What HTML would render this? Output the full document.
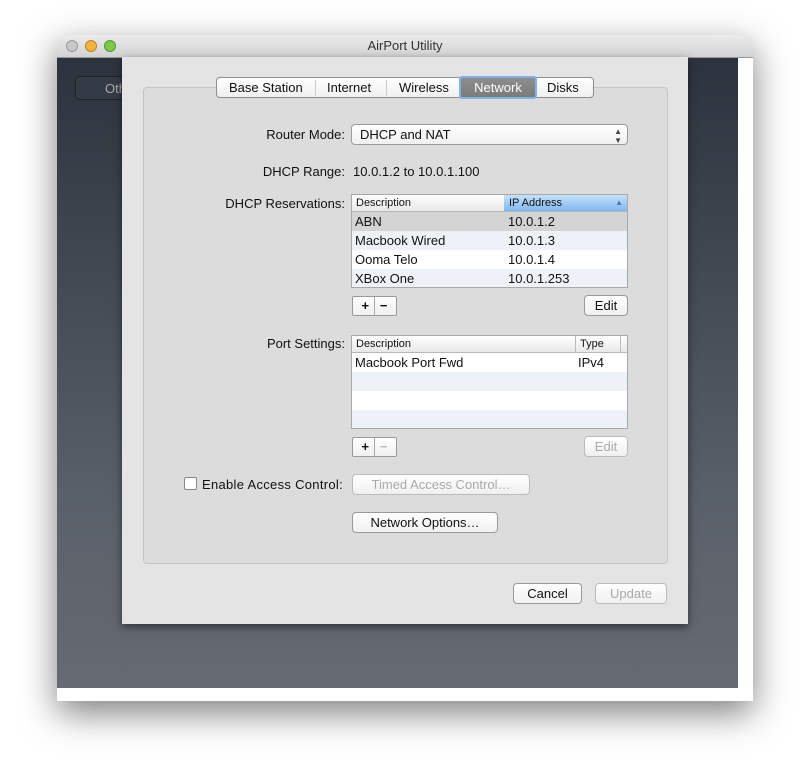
<!DOCTYPE html><html><head><style>
body{margin:0;width:810px;height:781px;background:#fff;font-family:"Liberation Sans",sans-serif;font-size:13px;color:#111;position:relative;overflow:hidden}
.a{position:absolute}
.win{left:57px;top:35px;width:696px;height:666px;background:#fff;box-shadow:0 12px 35px rgba(0,0,0,.5);border-radius:5px 5px 0 0}
.tb{left:0;top:0;width:696px;height:22px;background:linear-gradient(#ececec,#d2d2d2);border-bottom:1px solid #999;border-radius:5px 5px 0 0;text-align:center;line-height:22px;color:#333}
.dot{top:5px;width:12px;height:12px;border-radius:50%}
.dark{left:0;top:23px;width:681px;height:630px;background:linear-gradient(#2d333e,#5a6069 70%,#666a72)}
.sheet{left:122px;top:57px;width:566px;height:567px;background:#e4e4e4;box-shadow:0 3px 8px rgba(0,0,0,.5)}
.grp{left:143px;top:87px;width:523px;height:475px;background:#dcdcdc;border:1px solid #c4c4c4;border-radius:4px}
.btn{background:linear-gradient(#fff,#f0f0f0);border:1px solid #9a9a9a;border-radius:4px;text-align:center;box-sizing:border-box;height:21px;line-height:19px}
.dis{color:#aaa;border-color:#bbb}
.lbl{text-align:right;width:200px}
.tbl{background:#fff;border:1px solid #a8a8a8;box-sizing:border-box;overflow:hidden}
.hd{height:16px;background:linear-gradient(#fff,#e8e8e8);border-bottom:1px solid #b8b8b8;font-size:11px;line-height:16px}
.row{height:19px;line-height:19px;position:relative}
.alt{background:#eef2f8}
</style></head><body>
<div class="a win">
<div class="a tb">AirPort Utility
<div class="a dot" style="left:9px;background:#c8c8c8;border:1px solid #999;box-sizing:border-box"></div>
<div class="a dot" style="left:28px;background:#f5b33d;border:1px solid #b98220;box-sizing:border-box"></div>
<div class="a dot" style="left:47px;background:#7ec94c;border:1px solid #4f9a2a;box-sizing:border-box"></div>
</div>
<div class="a dark"></div>
</div>
<div class="a" style="left:75px;top:76px;width:80px;height:24px;background:#353b46;border:1px solid #1f232a;border-radius:4px;color:#aaa;line-height:24px;padding-left:29px;box-sizing:border-box">Oth</div>
<div class="a sheet"></div>
<div class="a grp"></div>
<div class="a" style="left:216px;top:77px;width:378px;height:21px;background:linear-gradient(#fff,#f0f0f0);border:1px solid #8e8e8e;border-radius:4px;box-sizing:border-box"></div>
<div class="a" style="left:229px;top:80px">Base Station</div>
<div class="a" style="left:315px;top:80px;width:1px;height:16px;background:#ccc"></div>
<div class="a" style="left:327px;top:80px">Internet</div>
<div class="a" style="left:386px;top:80px;width:1px;height:16px;background:#ccc"></div>
<div class="a" style="left:399px;top:80px">Wireless</div>
<div class="a" style="left:459px;top:76px;width:78px;height:23px;background:linear-gradient(#8e8e8e,#7a7a7a);border:2px solid #7db3ea;border-radius:3px;box-sizing:border-box;color:#fff;text-align:center;line-height:19px">Network</div>
<div class="a" style="left:547px;top:80px">Disks</div>

<div class="a lbl" style="left:145px;top:127px">Router Mode:</div>
<div class="a btn" style="left:351px;top:124px;width:277px;text-align:left;padding-left:8px">DHCP and NAT<span class="a" style="right:5px;font-size:8px;line-height:9px;top:2px;color:#444">▲<br>▼</span></div>
<div class="a lbl" style="left:145px;top:164px">DHCP Range:</div>
<div class="a" style="left:353px;top:164px">10.0.1.2 to 10.0.1.100</div>
<div class="a lbl" style="left:145px;top:196px">DHCP Reservations:</div>
<div class="a tbl" style="left:351px;top:194px;width:277px;height:94px">
<div class="hd" style="position:relative"><span style="padding-left:4px">Description</span><div class="a" style="left:152px;top:0;width:123px;height:16px;background:linear-gradient(#c6e0fa,#7fb8ee);padding-left:5px;box-sizing:border-box">IP Address<span style="float:right;margin-right:4px;font-size:8px;color:#4a7bb0">▲</span></div></div>
<div class="row" style="background:#d4d4d4"><span style="padding-left:3px">ABN</span><span class="a" style="left:156px">10.0.1.2</span></div>
<div class="row alt"><span style="padding-left:3px">Macbook Wired</span><span class="a" style="left:156px">10.0.1.3</span></div>
<div class="row"><span style="padding-left:3px">Ooma Telo</span><span class="a" style="left:156px">10.0.1.4</span></div>
<div class="row alt"><span style="padding-left:3px">XBox One</span><span class="a" style="left:156px">10.0.1.253</span></div>
</div>
<div class="a btn" style="left:352px;top:296px;width:45px;height:20px;border-radius:2px;font-weight:bold;line-height:18px">+ &nbsp; −</div>
<div class="a" style="left:374px;top:297px;width:1px;height:18px;background:#aaa"></div>
<div class="a btn" style="left:584px;top:295px;width:44px">Edit</div>

<div class="a lbl" style="left:145px;top:336px">Port Settings:</div>
<div class="a tbl" style="left:351px;top:335px;width:277px;height:94px">
<div class="hd" style="position:relative"><span style="padding-left:4px">Description</span><span class="a" style="left:223px;top:0;border-left:1px solid #bbb;padding-left:4px;width:40px;border-right:1px solid #bbb">Type</span></div>
<div class="row"><span style="padding-left:3px">Macbook Port Fwd</span><span class="a" style="left:226px">IPv4</span></div>
<div class="row alt"></div><div class="row"></div><div class="row alt"></div>
</div>
<div class="a btn" style="left:352px;top:437px;width:45px;height:20px;border-radius:2px;font-weight:bold;line-height:18px">+ &nbsp; <span style="color:#bbb">−</span></div>
<div class="a" style="left:374px;top:438px;width:1px;height:18px;background:#aaa"></div>
<div class="a btn dis" style="left:584px;top:436px;width:44px">Edit</div>

<div class="a" style="left:184px;top:477px;width:13px;height:13px;border:1px solid #888;border-radius:2px;background:#fff;box-sizing:border-box"></div>
<div class="a" style="left:202px;top:477px;letter-spacing:0.3px">Enable Access Control:</div>
<div class="a btn dis" style="left:352px;top:474px;width:178px">Timed Access Control…</div>
<div class="a btn" style="left:352px;top:512px;width:146px">Network Options…</div>
<div class="a btn" style="left:513px;top:583px;width:69px">Cancel</div>
<div class="a btn dis" style="left:595px;top:583px;width:72px">Update</div>
</body></html>
